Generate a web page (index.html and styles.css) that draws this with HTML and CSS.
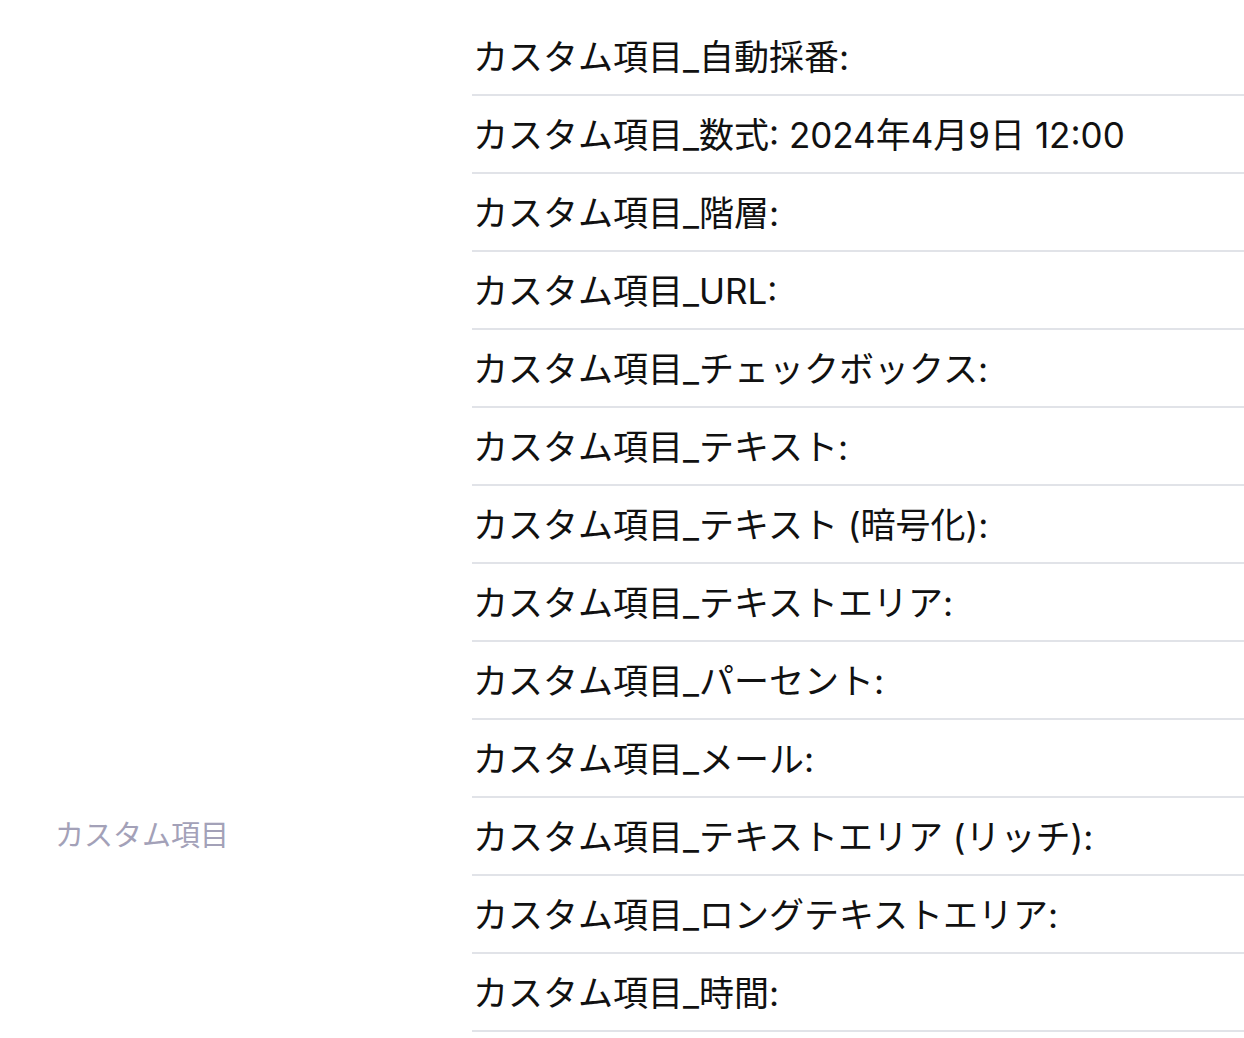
FILE: index.html
```html
<!DOCTYPE html>
<html lang="ja">
<head>
<meta charset="utf-8">
<title>カスタム項目</title>
<link rel="stylesheet" href="styles.css">
</head>
<body>
<section class="group">
  <div class="group-label">カスタム項目</div>
  <div class="fields">
    <div class="field">カスタム項目_自動採番:</div>
    <div class="field">カスタム項目_数式: 2024年4月9日 12:00</div>
    <div class="field">カスタム項目_階層:</div>
    <div class="field">カスタム項目_URL:</div>
    <div class="field">カスタム項目_チェックボックス:</div>
    <div class="field">カスタム項目_テキスト:</div>
    <div class="field">カスタム項目_テキスト (暗号化):</div>
    <div class="field">カスタム項目_テキストエリア:</div>
    <div class="field">カスタム項目_パーセント:</div>
    <div class="field">カスタム項目_メール:</div>
    <div class="field">カスタム項目_テキストエリア (リッチ):</div>
    <div class="field">カスタム項目_ロングテキストエリア:</div>
    <div class="field">カスタム項目_時間:</div>
  </div>
</section>
</body>
</html>
```

FILE: styles.css
```css
html, body {
  margin: 0;
  padding: 0;
  background: #ffffff;
}

body {
  font-family: Inter, "Noto Sans CJK JP", sans-serif;
  color: #111111;
  overflow: hidden;
  height: 1038px;
}

.group {
  display: flex;
  align-items: flex-start;
}

.group-label {
  width: 417px;
  flex: none;
  padding-left: 55px;
  padding-top: 816px;
  font-size: 29px;
  line-height: 40px;
  color: #a3a1b8;
}

.fields {
  flex: 1;
  padding-top: 18px;
}

.field {
  box-sizing: border-box;
  height: 78px;
  padding-bottom: 3px;
  display: flex;
  align-items: center;
  padding-left: 1px;
  border-bottom: 2px solid #e1e3e8;
  font-size: 35px;
  white-space: nowrap;
}
```
